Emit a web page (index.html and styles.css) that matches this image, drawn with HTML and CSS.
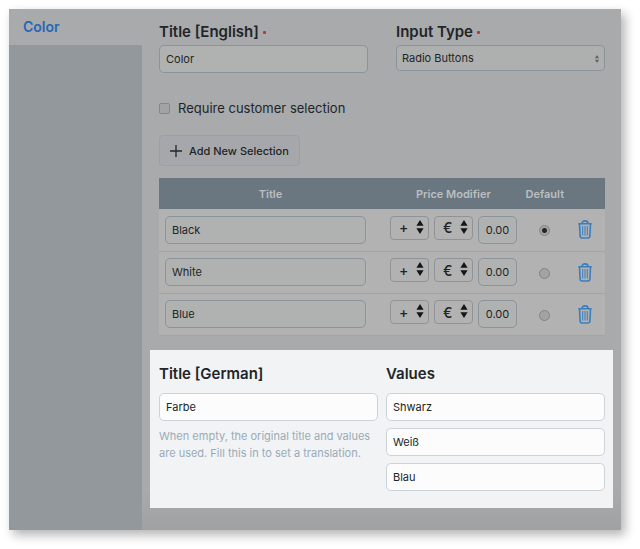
FILE: index.html
```html
<!DOCTYPE html>
<html lang="en">
<head>
    <meta charset="UTF-8">
    <title>Color</title>
    <link rel="stylesheet" href="styles.css">
</head>
<body>
    <!-- shared icons -->
    <svg class="sprite" aria-hidden="true">
        <symbol id="arrows" viewBox="0 0 8 14">
            <path d="M4 0L7.600 5.800H.4zM4 14L.4 8.200h7.200z" fill="currentColor"/>
        </symbol>
        <symbol id="trash" viewBox="0 0 14 19">
            <path d="M.3 3.700h13.400M4 3.500C4 1.800 5.200.9 7 .9s3 .9 3 2.600M1.500 4l.6 12q.1 2 2 2h5.800q1.900 0 2-2l.6-12" fill="none" stroke="currentColor" stroke-width="1.600"/>
            <path d="M4.700 6v9.500M7 6v9.500M9.300 6v9.500" fill="none" stroke="currentColor" stroke-width="1"/>
        </symbol>
    </svg>

    <div class="panel">
        <nav class="sidebar">
            <a class="tab" href="#">Color</a>
        </nav>

        <main class="content">
            <div class="fields">
                <div class="field">
                    <label for="title-en">Title [English] <span class="required"></span></label>
                    <input class="text" type="text" id="title-en" value="Color">
                </div>
                <div class="field">
                    <label for="input-type">Input Type <span class="required"></span></label>
                    <span class="select select-wide">
                        <select id="input-type">
                            <option>Radio Buttons</option>
                        </select>
                        <svg><use href="#arrows"/></svg>
                    </span>
                </div>
            </div>

            <label class="check"><input type="checkbox"> Require customer selection</label>

            <button class="add" type="button">
                <svg viewBox="0 0 12 12"><path d="M6 0v12M0 6h12" fill="none" stroke="currentColor" stroke-width="1.300"/></svg>
                Add New Selection
            </button>

            <table class="options">
                <thead>
                    <tr>
                        <th class="col-title">Title</th>
                        <th class="col-price">Price Modifier</th>
                        <th class="col-default">Default</th>
                        <th class="col-delete"></th>
                    </tr>
                </thead>
                <tbody>
                    <tr>
                        <td><input class="text" type="text" value="Black" aria-label="Title"></td>
                        <td>
                            <div class="price">
                                <span class="select"><select aria-label="Sign"><option>+</option></select><svg><use href="#arrows"/></svg></span>
                                <span class="select"><select aria-label="Unit"><option>€</option></select><svg><use href="#arrows"/></svg></span>
                                <input class="text" type="text" value="0.00" aria-label="Amount">
                            </div>
                        </td>
                        <td class="center"><input type="radio" name="default" aria-label="Default" checked></td>
                        <td class="center"><button class="delete" type="button" aria-label="Delete"><svg><use href="#trash"/></svg></button></td>
                    </tr>
                    <tr>
                        <td><input class="text" type="text" value="White" aria-label="Title"></td>
                        <td>
                            <div class="price">
                                <span class="select"><select aria-label="Sign"><option>+</option></select><svg><use href="#arrows"/></svg></span>
                                <span class="select"><select aria-label="Unit"><option>€</option></select><svg><use href="#arrows"/></svg></span>
                                <input class="text" type="text" value="0.00" aria-label="Amount">
                            </div>
                        </td>
                        <td class="center"><input type="radio" name="default" aria-label="Default"></td>
                        <td class="center"><button class="delete" type="button" aria-label="Delete"><svg><use href="#trash"/></svg></button></td>
                    </tr>
                    <tr>
                        <td><input class="text" type="text" value="Blue" aria-label="Title"></td>
                        <td>
                            <div class="price">
                                <span class="select"><select aria-label="Sign"><option>+</option></select><svg><use href="#arrows"/></svg></span>
                                <span class="select"><select aria-label="Unit"><option>€</option></select><svg><use href="#arrows"/></svg></span>
                                <input class="text" type="text" value="0.00" aria-label="Amount">
                            </div>
                        </td>
                        <td class="center"><input type="radio" name="default" aria-label="Default"></td>
                        <td class="center"><button class="delete" type="button" aria-label="Delete"><svg><use href="#trash"/></svg></button></td>
                    </tr>
                </tbody>
            </table>

            <section class="translation">
                <div class="field">
                    <label for="title-de">Title [German]</label>
                    <input class="text" type="text" id="title-de" value="Farbe">
                    <p class="hint">When empty, the original title and values are used. Fill this in to set a translation.</p>
                </div>
                <div class="field">
                    <label for="value-1">Values</label>
                    <input class="text" type="text" id="value-1" value="Shwarz">
                    <input class="text" type="text" aria-label="Value 2" value="Weiß">
                    <input class="text" type="text" aria-label="Value 3" value="Blau">
                </div>
            </section>
        </main>
    </div>
</body>
</html>
```
FILE: styles.css
```css
* {
    box-sizing: border-box;
}
body {
    margin: 0;
    padding: 9px 19px 19px 9px;
    background-color: #fff;
    font-family: Inter, "Liberation Sans", sans-serif;
    font-size: 11px;
    color: #222527;
}
input, select, button {
    font: inherit;
    color: inherit;
}
.sprite {
    display: none;
}
.panel {
    display: flex;
    background-color: #a8aaac;
    box-shadow: 4px 5px 10px rgba(0,0,0,0.3);
}
.sidebar {
    flex: 0 0 133px;
    background-color: #92989c;
}
.tab {
    display: block;
    padding: 8px 14px;
    background-color: #a8aaac;
    color: #2467b8;
    font-size: 14px;
    font-weight: 600;
    line-height: 20px;
    text-decoration: none;
}
.content {
    flex: 1;
    min-width: 0;
    padding: 13px 8px 22px;
    background-image: linear-gradient(to top, #9fa1a2, #a8aaac 40px);
}
.fields {
    display: grid;
    grid-template-columns: 1fr 1fr;
    gap: 28px;
    padding: 0 8px 0 9px;
}
.field {
    display: flex;
    flex-direction: column;
}
.field label {
    margin-bottom: 3px;
    font-size: 15px;
    font-weight: 600;
    line-height: 20px;
}
.required {
    display: inline-block;
    width: 3px;
    height: 3px;
    margin-bottom: 3px;
    border-radius: 1px;
    background-color: #b8393c;
}
.text {
    width: 100%;
    height: 28px;
    padding: 0 6px;
    border: 1px solid #8b949b;
    border-radius: 5px;
    background-color: #b0b2b1;
}
.select {
    position: relative;
    display: flex;
}
.select select {
    appearance: none;
    width: 100%;
    height: 24px;
    padding: 0 8px;
    border: 1px solid #8f9396;
    border-radius: 4px;
    background-color: #b2b2b2;
    font-size: 14px;
    font-weight: 500;
}
.select svg {
    position: absolute;
    right: 5px;
    top: 4px;
    width: 8px;
    height: 14px;
    color: #141516;
    pointer-events: none;
}
.select-wide select {
    height: 26px;
    padding: 0 5px;
    border-color: #8b949b;
    background-color: #aeb0af;
    font-size: 11px;
    font-weight: 400;
}
.select-wide svg {
    top: 10px;
    width: 6px;
    height: 8px;
    color: #59636b;
}
.check {
    display: flex;
    align-items: center;
    gap: 8px;
    margin: 25px 9px 17px;
    font-size: 13px;
    line-height: 20px;
}
.check input {
    appearance: none;
    width: 11px;
    height: 11px;
    margin: 0;
    border: 1px solid #858686;
    border-radius: 2px;
    background-color: #a3a3a3;
}
.add {
    display: flex;
    align-items: center;
    gap: 7px;
    height: 31px;
    margin-left: 9px;
    padding: 0 10px;
    border: 1px solid #9da0a3;
    border-radius: 4px;
    background-color: #a6a7ab;
    font-weight: 500;
}
.add svg {
    width: 12px;
    height: 12px;
}
.options {
    width: calc(100% - 17px);
    margin: 12px 8px 14px 9px;
    border-collapse: collapse;
    table-layout: fixed;
}
.options th {
    height: 31px;
    padding: 0;
    background-color: #6a7780;
    color: #bbbfc1;
    font-weight: 600;
}
.col-title {
    width: 50%;
}
.col-price {
    width: 32%;
}
.col-default {
    width: 9%;
}
.options td {
    height: 42px;
    padding: 0 16px 0 6px;
    border-bottom: 1px solid #a2a4a6;
    background-color: #b2b2b2;
}
.options td + td {
    padding: 0 8px;
}
.options .center {
    padding: 0;
    text-align: center;
}
.price {
    display: grid;
    grid-template-columns: 1fr 1fr 1fr;
    gap: 5px;
}
.price .text {
    padding: 0 7px;
}
.options input[type="radio"] {
    appearance: none;
    width: 11px;
    height: 11px;
    margin: 0;
    border: 1px solid #838485;
    border-radius: 50%;
    background-color: #a3a3a3;
    vertical-align: middle;
}
.options input[type="radio"]:checked {
    background-image: radial-gradient(circle, #252525 2px, transparent 3px);
}
.delete {
    padding: 0;
    border: none;
    background: none;
    color: #397fc0;
    vertical-align: middle;
}
.delete svg {
    display: block;
    width: 14px;
    height: 19px;
}
.translation {
    display: grid;
    grid-template-columns: 1fr 1fr;
    gap: 8px;
    padding: 14px 8px 10px 9px;
    background-color: #f1f3f5;
}
.translation label {
    margin-bottom: 9px;
}
.translation .text {
    margin-bottom: 7px;
    border-color: #cbd3da;
    background-color: #fcfcfc;
}
.hint {
    margin: 0;
    color: #9aabb8;
    line-height: 17px;
}
```
